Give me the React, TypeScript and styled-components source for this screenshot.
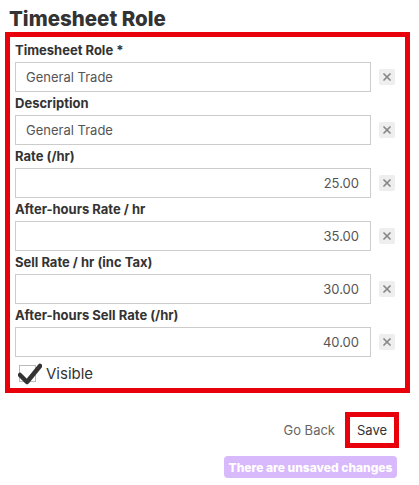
import React from "react";
import styled, { createGlobalStyle } from "styled-components";
import { X } from "lucide-react";

const GlobalStyle = createGlobalStyle`
  body {
    margin: 0;
    background: #fff;
    font-family: Inter, "Noto Sans", sans-serif;
    color: #333;
  }
`;

const Page = styled.div`
  width: 419px;
  box-sizing: border-box;
  padding: 5px 9px 0 5px;
`;

const Title = styled.h2`
  margin: 0;
  padding-left: 4px;
  font-size: 20.5px;
  line-height: 27px;
  font-weight: 800;
  color: #333;
`;

const FormBox = styled.div`
  border: 5px solid #e8000b;
  padding: 2px 10px 0 5px;
  display: flex;
  flex-direction: column;
`;

const Field = styled.div`
  display: flex;
  flex-direction: column;
`;

const Label = styled.label`
  font-size: 13px;
  font-weight: 700;
  line-height: 23px;
  color: #333;
`;

const InputRow = styled.div`
  display: flex;
  align-items: center;
  gap: 8px;
`;

const Input = styled.input<{ $numeric?: boolean }>`
  width: 356px;
  height: 30px;
  box-sizing: border-box;
  border: 1px solid #ccc;
  padding: 0 11px 0 10px;
  font-family: inherit;
  font-size: 13px;
  color: #555;
  text-align: ${(p) => (p.$numeric ? "right" : "left")};
  outline: none;
`;

const ClearButton = styled.button`
  width: 16px;
  height: 16px;
  padding: 0;
  border: none;
  border-radius: 2px;
  background: #eee;
  color: #888;
  display: flex;
  align-items: center;
  justify-content: center;
`;

const CheckRow = styled.div`
  display: flex;
  align-items: center;
  height: 31px;
  padding: 2px 0 0 4px;
  box-sizing: border-box;
  gap: 10px;
`;

const CheckBox = styled.span`
  position: relative;
  width: 17px;
  height: 17px;
  box-sizing: border-box;
  border: 1px solid #bbb;
  background: #fff;
`;

const CheckMark = styled.svg`
  position: absolute;
  left: -2px;
  top: -3px;
`;

const CheckLabel = styled.span`
  font-size: 15px;
  color: #333;
`;

const Footer = styled.div`
  display: flex;
  flex-direction: column;
  align-items: flex-end;
  padding: 19px 11px 0 0;
  gap: 8px;
`;

const Actions = styled.div`
  display: flex;
  align-items: center;
  gap: 10px;
`;

const LinkButton = styled.button`
  border: none;
  background: none;
  padding: 0;
  font-family: inherit;
  font-size: 13px;
  color: #666;
`;

const SaveButton = styled.button`
  width: 54px;
  height: 36px;
  box-sizing: border-box;
  border: 5px solid #e8000b;
  background: #fff;
  font-family: inherit;
  font-size: 13px;
  color: #333;
  padding: 0;
`;

const Badge = styled.span`
  margin-right: 2px;
  height: 22px;
  width: 173px;
  border-radius: 4px;
  background: #d8b9fc;
  color: #fff;
  font-size: 12px;
  font-weight: 800;
  display: flex;
  align-items: center;
  justify-content: center;
`;

const fields = [
  { label: "Timesheet Role *", value: "General Trade" },
  { label: "Description", value: "General Trade" },
  { label: "Rate (/hr)", value: "25.00", numeric: true },
  { label: "After-hours Rate / hr", value: "35.00", numeric: true },
  { label: "Sell Rate / hr (inc Tax)", value: "30.00", numeric: true },
  { label: "After-hours Sell Rate (/hr)", value: "40.00", numeric: true },
];

export default function App() {
  return (
    <Page>
      <GlobalStyle />
      <Title>Timesheet Role</Title>
      <FormBox>
        {fields.map((f) => (
          <Field key={f.label}>
            <Label>{f.label}</Label>
            <InputRow>
              <Input $numeric={f.numeric} defaultValue={f.value} />
              <ClearButton>
                <X size={12} strokeWidth={3.5} />
              </ClearButton>
            </InputRow>
          </Field>
        ))}
        <CheckRow>
          <CheckBox>
            <CheckMark width="24" height="22" viewBox="0 0 24 22">
              <path d="M2 12 L9 19 L22 3" fill="none" stroke="#333" strokeWidth="4.5" strokeLinecap="round" strokeLinejoin="round" />
            </CheckMark>
          </CheckBox>
          <CheckLabel>Visible</CheckLabel>
        </CheckRow>
      </FormBox>
      <Footer>
        <Actions>
          <LinkButton>Go Back</LinkButton>
          <SaveButton>Save</SaveButton>
        </Actions>
        <Badge>There are unsaved changes</Badge>
      </Footer>
    </Page>
  );
}
